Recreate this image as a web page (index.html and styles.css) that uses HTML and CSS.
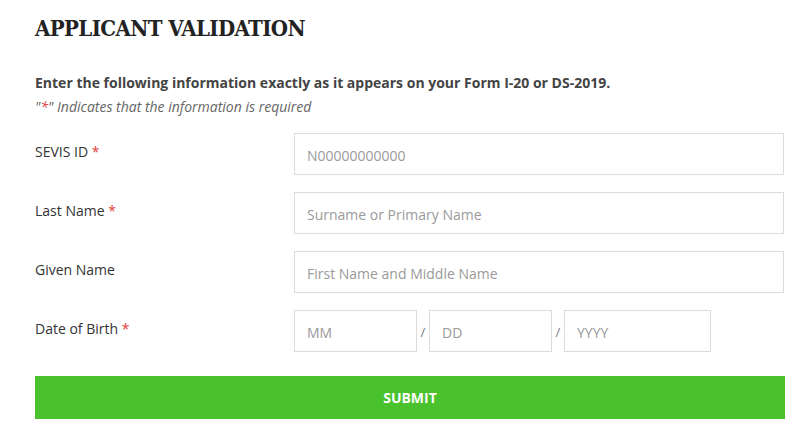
FILE: index.html
```html
<!DOCTYPE html>
<html lang="en">
<head>
<meta charset="utf-8">
<title>Applicant Validation</title>
<link rel="stylesheet" href="styles.css">
</head>
<body>
<main class="page">
  <h1 class="title">APPLICANT VALIDATION</h1>
  <p class="intro">Enter the following information exactly as it appears on your Form I-20 or DS-2019.</p>
  <p class="note">"<span class="req">*</span>" Indicates that the information is required</p>
  <form class="form">
    <div class="row">
      <label class="label">SEVIS ID <span class="req">*</span></label>
      <input class="field" type="text" placeholder="N00000000000">
    </div>
    <div class="row">
      <label class="label">Last Name <span class="req">*</span></label>
      <input class="field" type="text" placeholder="Surname or Primary Name">
    </div>
    <div class="row">
      <label class="label">Given Name</label>
      <input class="field" type="text" placeholder="First Name and Middle Name">
    </div>
    <div class="row">
      <label class="label">Date of Birth <span class="req">*</span></label>
      <div class="date">
        <input class="field mm" type="text" placeholder="MM">
        <span class="slash">/</span>
        <input class="field dd" type="text" placeholder="DD">
        <span class="slash">/</span>
        <input class="field yyyy" type="text" placeholder="YYYY">
      </div>
    </div>
    <button class="submit" type="button">SUBMIT</button>
  </form>
</main>
</body>
</html>
```

FILE: styles.css
```css
* { box-sizing: border-box; }
html, body { margin: 0; padding: 0; background: #fff; }
body {
  font-family: "Open Sans", "Liberation Sans", sans-serif;
  font-size: 14px;
  color: #333;
}
.page {
  width: 750px;
  margin-left: 35px;
  padding-top: 15px;
}
.title {
  margin: 0;
  font-family: "DejaVu Serif Condensed", "DejaVu Serif", "Liberation Serif", serif;
  font-stretch: condensed;
  font-weight: bold;
  font-size: 22px;
  line-height: 26px;
  color: #222;
  letter-spacing: -0.6px;
}
.intro {
  margin: 32px 0 0;
  font-weight: bold;
  font-size: 14px;
  line-height: 20px;
  color: #444;
}
.note {
  margin: 4px 0 0;
  font-style: italic;
  font-size: 14px;
  line-height: 20px;
  color: #666;
}
.req { color: #e2403a; }
.form {
  margin-top: 16px;
  display: flex;
  flex-direction: column;
  gap: 17px;
}
.row {
  display: grid;
  grid-template-columns: 259px 490px;
  align-items: center;
}
.label {
  font-size: 14px;
  line-height: 20px;
  color: #333;
  padding-bottom: 5px;
}
.field {
  height: 42px;
  width: 100%;
  border: 1px solid #dcdcdc;
  padding: 3px 12px 0;
  font-family: "Open Sans", "Liberation Sans", sans-serif;
  font-size: 14px;
  color: #333;
  background: #fff;
  outline: none;
  border-radius: 0;
}
.field::placeholder { color: #9a9a9a; }
.date {
  display: flex;
  align-items: center;
}
.date .mm, .date .dd { width: 123px; }
.date .yyyy { width: 147px; }
.slash {
  width: 12px;
  text-align: center;
  color: #777;
  font-size: 13px;
  padding-top: 2px;
}
.submit {
  margin-top: 7px;
  height: 43px;
  width: 750px;
  border: none;
  background: #49c22e;
  color: #fff;
  font-family: "Open Sans", "Liberation Sans", sans-serif;
  font-weight: bold;
  font-size: 14px;
  cursor: pointer;
}
```
